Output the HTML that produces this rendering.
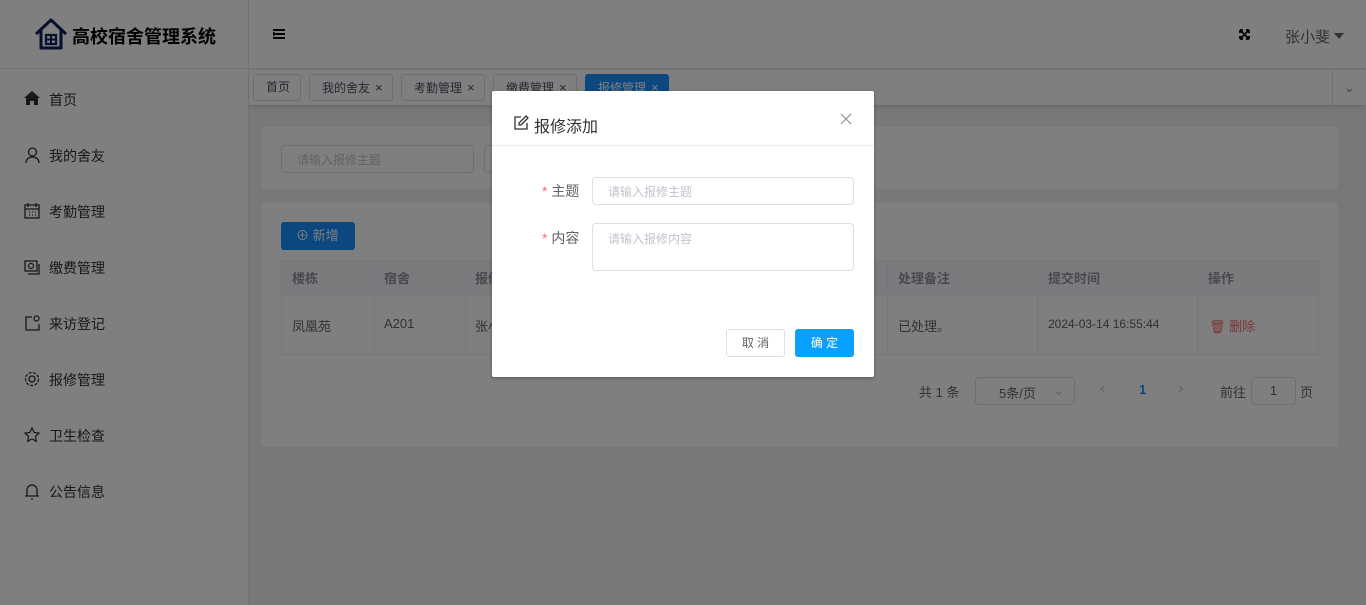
<!DOCTYPE html>
<html><head><meta charset="utf-8"><style>
*{margin:0;padding:0;box-sizing:border-box}
body{width:1366px;height:605px;overflow:hidden;position:relative;font-family:"Liberation Sans","Noto Sans CJK SC",sans-serif;font-size:14px;color:#303133;background:#f0f0f0}
.abs{position:absolute}
.side{left:0;top:0;width:249px;height:605px;background:#fff;border-right:1px solid #e6e6e6}
.logo{left:0;top:0;width:249px;height:69px;border-bottom:1px solid #e6e6e6}
.hdr{left:249px;top:0;width:1117px;height:69px;background:#fff;border-bottom:1px solid #e6e6e6}
.menu div{position:absolute;left:49px;font-size:14px;color:#303133}
.tabs{left:249px;top:70px;width:1117px;height:35px;background:#fff;box-shadow:0 2px 4px rgba(0,0,0,.12)}
.tab{position:absolute;top:4px;height:27px;border:1px solid #d8dce5;border-radius:3px;font-size:12px;color:#495060;line-height:25px;padding:0 12px;background:#fff;white-space:nowrap}
.tab span{margin-left:5px;font-size:13px}
.card{background:#fff;border:1px solid #ebeef5;border-radius:4px}
.inp{border:1px solid #dcdfe6;border-radius:4px;background:#fff;color:#c0c4cc;font-size:13px}
.cell{position:absolute;font-size:13px;color:#606266}
.ov{left:0;top:0;width:1366px;height:605px;background:rgba(0,0,0,.5)}
.dlg{left:492px;top:91px;width:382px;height:286px;background:#fff;border-radius:2px;box-shadow:0 1px 3px rgba(0,0,0,.3)}
</style></head><body>
<div class="abs side"></div>
<div class="abs logo">
<svg class="abs" style="left:33px;top:16px" width="36" height="36" viewBox="0 0 36 36"><path d="M3 18 L18 4 L33 18 M8 14 V32 H28 V14" fill="none" stroke="#0d1f5c" stroke-width="3" stroke-linejoin="round"/><rect x="13" y="19" width="10" height="9" fill="none" stroke="#0d1f5c" stroke-width="2.2"/><path d="M18 19v9M13 23.5h10" stroke="#0d1f5c" stroke-width="2"/></svg>
<div class="abs" style="left:72px;top:23px;font-size:18px;font-weight:bold;color:#000">高校宿舍管理系统</div>
</div>
<div class="abs hdr">
<svg class="abs" style="left:24px;top:29px" width="12" height="10"><path d="M0 1h12M3 5h9M0 9h12M0 3.5l2 1.5-2 1.5" stroke="#000" stroke-width="2" fill="none"/></svg>
<svg class="abs" style="left:990px;top:29px" width="11" height="11"><path d="M1 1l9 9M10 1l-9 9M1 1h3M1 1v3M10 1h-3M10 1v3M1 10h3M1 10v-3M10 10h-3M10 10v-3" stroke="#000" stroke-width="1.8" fill="none"/></svg>
<div class="abs" style="left:1036px;top:26px;font-size:15px;color:#606266">张小斐</div>
<div class="abs" style="left:1085px;top:33px;border:5px solid transparent;border-top:6px solid #606266;border-bottom:0"></div>
</div>
<div class="menu">
<svg class="abs" style="left:24px;top:91px" width="16" height="14"><path d="M8 0L0 7h2v7h4v-4h4v4h4V7h2z" fill="#303133"/></svg><div style="top:90px">首页</div>
<svg class="abs" style="left:25px;top:147px" width="15" height="16"><circle cx="7.5" cy="5" r="4" fill="none" stroke="#303133" stroke-width="1.3"/><path d="M1 16c0-4 3-6 6.5-6s6.5 2 6.5 6" fill="none" stroke="#303133" stroke-width="1.3"/></svg><div style="top:146px">我的舍友</div>
<svg class="abs" style="left:24px;top:203px" width="16" height="16"><rect x="1" y="2" width="14" height="13" fill="none" stroke="#303133" stroke-width="1.3"/><path d="M1 6h14M4 0v4M12 0v4M5 9h1M8 9h1M11 9h1M5 12h1M8 12h1M11 12h1" stroke="#303133" stroke-width="1.3"/></svg><div style="top:202px">考勤管理</div>
<svg class="abs" style="left:24px;top:259px" width="16" height="16"><rect x="1" y="2" width="12" height="10" fill="none" stroke="#303133" stroke-width="1.3"/><circle cx="7" cy="7" r="2.5" fill="none" stroke="#303133" stroke-width="1.2"/><path d="M4 15h11V5" fill="none" stroke="#303133" stroke-width="1.3"/></svg><div style="top:258px">缴费管理</div>
<svg class="abs" style="left:24px;top:315px" width="16" height="16"><path d="M8 2H2v13h13V9" fill="none" stroke="#303133" stroke-width="1.3"/><circle cx="12.5" cy="3.5" r="2.5" fill="none" stroke="#303133" stroke-width="1.2"/></svg><div style="top:314px">来访登记</div>
<svg class="abs" style="left:24px;top:371px" width="16" height="16"><circle cx="8" cy="8" r="6.5" fill="none" stroke="#303133" stroke-width="1.3" stroke-dasharray="3 1.5"/><circle cx="8" cy="8" r="3" fill="none" stroke="#303133" stroke-width="1.3"/></svg><div style="top:370px">报修管理</div>
<svg class="abs" style="left:24px;top:427px" width="16" height="16"><path d="M8 1l2.1 4.5 4.9.6-3.6 3.3 1 4.9L8 11.9 3.6 14.3l1-4.9L1 6.1l4.9-.6z" fill="none" stroke="#303133" stroke-width="1.2"/></svg><div style="top:426px">卫生检查</div>
<svg class="abs" style="left:24px;top:483px" width="16" height="17"><path d="M3 13V7a5 5 0 0 1 10 0v6M1 13h14M7 16h2" fill="none" stroke="#303133" stroke-width="1.3"/></svg><div style="top:482px">公告信息</div>
</div>
<div class="abs tabs">
<div class="tab" style="left:4px;width:48px">首页</div>
<div class="tab" style="left:60px;width:84px">我的舍友<span>×</span></div>
<div class="tab" style="left:152px;width:84px">考勤管理<span>×</span></div>
<div class="tab" style="left:244px;width:84px">缴费管理<span>×</span></div>
<div class="tab" style="left:336px;width:84px;background:#1890ff;border-color:#1890ff;color:#fff">报修管理<span>×</span></div>
<div class="abs" style="right:0;top:0;width:34px;height:35px;border-left:1px solid #e6e6e6;text-align:center;line-height:35px;color:#909399">⌄</div>
</div>
<div class="abs card" style="left:260px;top:125px;width:1079px;height:65px">
<div class="abs inp" style="left:20px;top:19px;width:193px;height:28px;padding:5px 15px;font-size:12px">请输入报修主题</div>
<div class="abs inp" style="left:223px;top:19px;width:193px;height:28px"></div>
</div>
<div class="abs card" style="left:260px;top:201px;width:1079px;height:247px">
<div class="abs" style="left:20px;top:20px;width:74px;height:28px;background:#1890ff;border-radius:3px;color:#fff;font-size:13px;line-height:28px;padding-left:15px">⊕ 新增</div>
<div class="abs" style="left:20px;top:58px;width:1038px;height:95px;border:1px solid #ebeef5"></div>
<div class="abs" style="left:21px;top:59px;width:1036px;height:35px;background:#f5f7fa;border-bottom:1px solid #ebeef5"></div>
</div>
<div class="abs" style="left:374px;top:260px;width:1px;height:94px;background:#ebeef5"></div>
<div class="abs" style="left:465px;top:260px;width:1px;height:94px;background:#ebeef5"></div>
<div class="abs" style="left:887px;top:260px;width:1px;height:94px;background:#ebeef5"></div>
<div class="abs" style="left:1037px;top:260px;width:1px;height:94px;background:#ebeef5"></div>
<div class="abs" style="left:1197px;top:260px;width:1px;height:94px;background:#ebeef5"></div>
<div class="cell" style="left:292px;top:268px;color:#909399;font-weight:bold">楼栋</div>
<div class="cell" style="left:384px;top:268px;color:#909399;font-weight:bold">宿舍</div>
<div class="cell" style="left:475px;top:268px;color:#909399;font-weight:bold">报修</div>
<div class="cell" style="left:898px;top:268px;color:#909399;font-weight:bold">处理备注</div>
<div class="cell" style="left:1048px;top:268px;color:#909399;font-weight:bold">提交时间</div>
<div class="cell" style="left:1208px;top:268px;color:#909399;font-weight:bold">操作</div>
<div class="cell" style="left:292px;top:316px">凤凰苑</div>
<div class="cell" style="left:384px;top:316px">A201</div>
<div class="cell" style="left:475px;top:316px">张小</div>
<div class="cell" style="left:898px;top:316px">已处理。</div>
<div class="cell" style="left:1048px;top:317px;font-size:12px">2024-03-14 16:55:44</div>
<div class="cell" style="left:1209px;top:316px;color:#f56c6c;font-size:13px">🗑 删除</div>
<div class="cell" style="left:919px;top:382px">共 1 条</div>
<div class="abs inp" style="left:975px;top:377px;width:100px;height:28px;color:#606266;font-size:13px;padding:5px 23px">5条/页 <span style="position:absolute;right:10px;color:#c0c4cc">⌄</span></div>
<div class="cell" style="left:1100px;top:380px;color:#c0c4cc;font-size:16px">‹</div>
<div class="cell" style="left:1139px;top:382px;color:#1890ff;font-weight:bold">1</div>
<div class="cell" style="left:1178px;top:380px;color:#c0c4cc;font-size:16px">›</div>
<div class="cell" style="left:1220px;top:382px">前往</div>
<div class="abs inp" style="left:1251px;top:377px;width:45px;height:28px;color:#606266;text-align:center;line-height:26px;font-size:13px">1</div>
<div class="cell" style="left:1300px;top:382px">页</div>
<div class="abs ov"></div>
<div class="abs dlg">
<svg class="abs" style="left:21px;top:24px" width="16" height="16"><path d="M8 2H2v12h12V8" fill="none" stroke="#303133" stroke-width="1.3"/><path d="M13 1l2 2-7 7H6V8z" fill="none" stroke="#303133" stroke-width="1.3"/></svg>
<div class="abs" style="left:42px;top:22px;font-size:16px;color:#303133">报修添加</div>
<svg class="abs" style="left:348px;top:22px" width="12" height="12"><path d="M1 1l10 10M11 1L1 11" stroke="#909399" stroke-width="1.2"/></svg>
<div class="abs" style="left:0;top:54px;width:382px;height:1px;background:#ebeef5"></div>
<div class="abs" style="left:50px;top:90px;font-size:14px;color:#606266"><span style="color:#f56c6c">*</span> 主题</div>
<div class="abs inp" style="left:100px;top:86px;width:262px;height:28px;padding:5px 15px;font-size:12px">请输入报修主题</div>
<div class="abs" style="left:50px;top:137px;font-size:14px;color:#606266"><span style="color:#f56c6c">*</span> 内容</div>
<div class="abs inp" style="left:100px;top:132px;width:262px;height:48px;padding:6px 15px;font-size:12px">请输入报修内容</div>
<div class="abs" style="left:234px;top:238px;width:59px;height:28px;border:1px solid #dcdfe6;border-radius:3px;text-align:center;line-height:26px;font-size:12px;color:#606266">取 消</div>
<div class="abs" style="left:303px;top:238px;width:59px;height:28px;background:#0aa0ff;border-radius:3px;text-align:center;line-height:28px;font-size:12px;color:#fff">确 定</div>
</div>
</body></html>
